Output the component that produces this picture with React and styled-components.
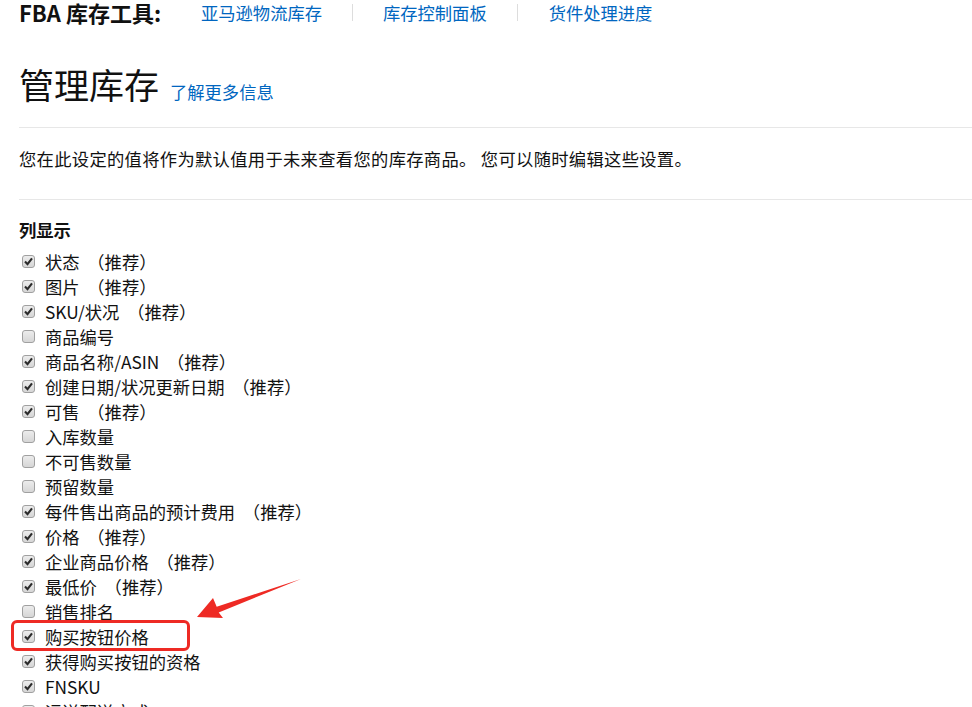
import React from 'react';
import styled, { createGlobalStyle } from 'styled-components';

const GlobalStyle = createGlobalStyle`
  body {
    margin: 0;
    background: #fff;
    font-family: "Noto Sans CJK SC", "Liberation Sans", sans-serif;
    color: #111;
  }
`;

const Page = styled.div`
  position: relative;
  padding-left: 19px;
  height: 707px;
  overflow: hidden;
`;

const ToolBar = styled.div`
  display: flex;
  align-items: center;
  height: 25px;
`;

const ToolTitle = styled.div`
  font-size: 22px;
  font-weight: 700;
  line-height: 25px;
  white-space: nowrap;
  width: 182px;
`;

const ToolLink = styled.a`
  color: #0066c0;
  font-size: 17.3px;
  line-height: 25px;
  text-decoration: none;
`;

const Divider = styled.span`
  width: 1px;
  height: 17px;
  background: #ddd;
  margin: 0 ${(p) => p.right}px 0 ${(p) => p.left}px;
`;

const TitleRow = styled.div`
  display: flex;
  align-items: baseline;
  gap: 11px;
  margin-top: 39px;
  height: 40px;
`;

const PageTitle = styled.h1`
  margin: 0;
  font-size: 35px;
  font-weight: 400;
  line-height: 40px;
`;

const LearnMore = styled.a`
  color: #0066c0;
  font-size: 17.3px;
  text-decoration: none;
`;

const Rule = styled.hr`
  border: 0;
  border-top: 1px solid #e7e7e7;
  margin: ${(p) => p.top}px 0 0;
`;

const Note = styled.p`
  margin: 18px 0 0;
  font-size: 17.3px;
  line-height: 25px;
  letter-spacing: 0.32px;
`;

const SectionTitle = styled.h3`
  margin: 17px 0 7px;
  font-size: 17.3px;
  font-weight: 700;
  line-height: 25px;
`;

const OptionList = styled.div`
  display: flex;
  flex-direction: column;
`;

const Option = styled.label`
  position: relative;
  display: flex;
  align-items: center;
  height: 25px;
  font-size: 17.3px;
  white-space: pre;
`;

const Box = styled.span`
  display: inline-flex;
  align-items: center;
  justify-content: center;
  box-sizing: border-box;
  width: 13px;
  height: 13px;
  margin: 0 10px 0 3px;
  border: 1px solid #a0a0a0;
  border-radius: 3px;
  background: linear-gradient(#ececec, #d6d6d6);
`;

const Highlight = styled.span`
  position: absolute;
  left: -8px;
  top: -4px;
  width: 179px;
  height: 31px;
  box-sizing: border-box;
  border: 3px solid #ee2a24;
  border-radius: 6px;
  pointer-events: none;
`;

const Arrow = styled.svg`
  position: absolute;
  left: 0;
  top: 0;
  pointer-events: none;
`;

const options = [
  ['状态', true, true],
  ['图片', true, true],
  ['SKU/状况', true, true],
  ['商品编号', false, false],
  ['商品名称/ASIN', true, true],
  ['创建日期/状况更新日期', true, true],
  ['可售', true, true],
  ['入库数量', false, false],
  ['不可售数量', false, false],
  ['预留数量', false, false],
  ['每件售出商品的预计费用', true, true],
  ['价格', true, true],
  ['企业商品价格', true, true],
  ['最低价', true, true],
  ['销售排名', false, false],
  ['购买按钮价格', true, false, true],
  ['获得购买按钮的资格', true, false],
  ['FNSKU', true, false],
  ['运送配送方式', false, false],
];

const Check = ({ on }) => (
  <Box>
    {on && (
      <svg width="9" height="9" viewBox="0 0 9 9">
        <path d="M1 4.6 L3.5 7.2 L8 1.4" fill="none" stroke="#2b2b2b" strokeWidth="2.1" />
      </svg>
    )}
  </Box>
);

export default function App() {
  return (
    <>
      <GlobalStyle />
      <Page>
        <ToolBar>
          <ToolTitle>FBA 库存工具:</ToolTitle>
          <ToolLink href="#">亚马逊物流库存</ToolLink>
          <Divider left={30} right={30} />
          <ToolLink href="#">库存控制面板</ToolLink>
          <Divider left={30} right={31} />
          <ToolLink href="#">货件处理进度</ToolLink>
        </ToolBar>

        <TitleRow>
          <PageTitle>管理库存</PageTitle>
          <LearnMore href="#">了解更多信息</LearnMore>
        </TitleRow>

        <Rule top={23} />
        <Note>您在此设定的值将作为默认值用于未来查看您的库存商品。 您可以随时编辑这些设置。</Note>
        <Rule top={28} />

        <SectionTitle>列显示</SectionTitle>
        <OptionList>
          {options.map(([label, on, rec, marked]) => (
            <Option key={label}>
              <Check on={on} />
              {label}
              {rec ? '  （推荐）' : ''}
              {marked && <Highlight />}
            </Option>
          ))}
        </OptionList>

        <Arrow width="972" height="707">
          <polygon
            points="197,617 223,618 218.7,612.4 301,579 216.7,606.8 213,598"
            fill="#ee2a24"
          />
        </Arrow>
      </Page>
    </>
  );
}
